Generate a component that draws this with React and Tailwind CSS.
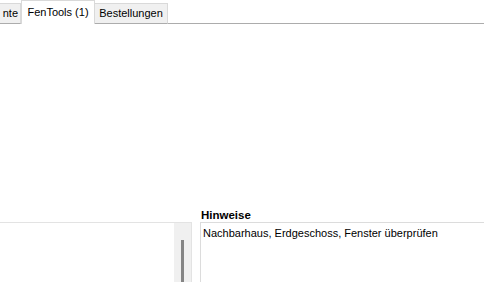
export default function App() {
  const font = { fontFamily: '"Liberation Sans", Arial, sans-serif' };
  return (
    <div className="w-[484px] h-[282px] bg-white overflow-hidden flex flex-col text-[11px] text-black" style={font}>
      {/* tab strip */}
      <div className="h-[24px] flex items-end border-b border-[#acacac] bg-white shrink-0">
        <div className="h-[21px] w-[21px] bg-[#f0f0f0] border-r border-t border-[#d9d9d9] flex items-center justify-end pr-[2px] leading-none -mb-px border-b border-b-[#acacac]">
          <span>nte</span>
        </div>
        <div className="h-[24px] w-[74px] bg-white border-x border-t border-[#d9d9d9] flex items-center justify-center leading-none -mb-px pb-[1px]">
          FenTools (1)
        </div>
        <div className="h-[21px] w-[73px] bg-[#f0f0f0] border-r border-t border-[#d9d9d9] flex items-center justify-center leading-none -mb-px border-b border-b-[#acacac]">
          Bestellungen
        </div>
      </div>
      {/* main content area */}
      <div className="h-[184px] shrink-0 bg-white" />
      {/* bottom panels */}
      <div className="flex flex-1 min-h-0">
        <div className="w-[192px] flex flex-col">
          <div className="h-[14px] shrink-0" />
          <div className="flex-1 flex border-t border-[#e3e3e3] border-r border-r-[#e3e3e3]">
            <div className="flex-1" />
            <div className="w-[17px] bg-[#f0f0f0] flex justify-center pt-[17px] pr-[1px]">
              <div className="w-[3px] h-full bg-[#858585]" />
            </div>
          </div>
        </div>
        <div className="w-[8px]" />
        <div className="flex-1 flex flex-col">
          <div className="h-[14px] shrink-0 font-bold text-[11.5px] leading-[14px] pl-[1px]">Hinweise</div>
          <div className="flex-1 border-t border-l border-[#dcdcdc] pl-[2px] pt-[3px] leading-[14px]">
            Nachbarhaus, Erdgeschoss, Fenster überprüfen
          </div>
        </div>
      </div>
    </div>
  );
}
